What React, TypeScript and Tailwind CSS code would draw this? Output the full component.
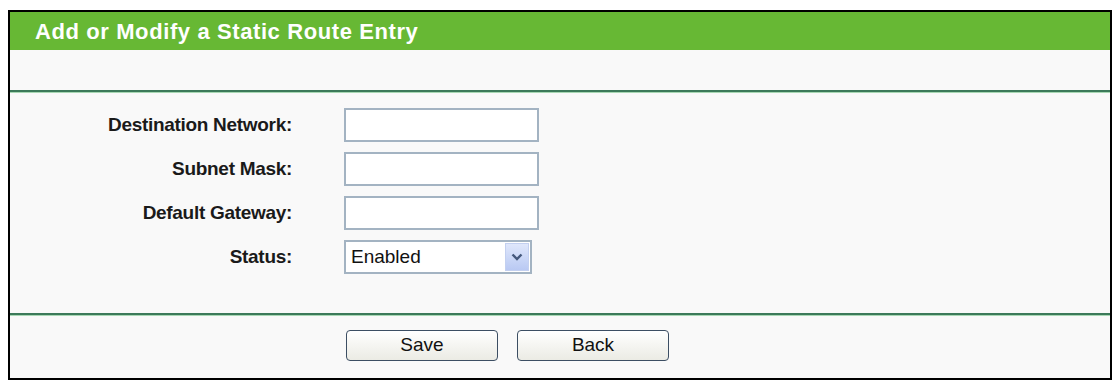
export default function App() {
  const rows = [
    { label: "Destination Network:" },
    { label: "Subnet Mask:" },
    { label: "Default Gateway:" },
  ];
  return (
    <div className="min-h-screen bg-white pt-[10px] pl-[8px]" style={{ fontFamily: '"Liberation Sans", Arial, sans-serif' }}>
      <div className="flex h-[370px] w-[1104px] flex-col border-2 border-black bg-[#f9f9f9]">
        <div className="flex h-[38px] items-center bg-[#67b834] pl-[25px] text-[22px] font-bold tracking-[0.6px] text-white">
          Add or Modify a Static Route Entry
        </div>
        <div className="h-[40px]" />
        <div className="h-[2px] bg-[#3c7a5a] shadow-[0_1px_0_#a8d8b4]" />
        <div className="flex flex-col gap-[10px] pt-[16px]">
          {rows.map((r) => (
            <div key={r.label} className="flex items-center">
              <div className="w-[282px] text-right text-[19px] font-bold tracking-[-0.3px] text-[#1a1a1a]">{r.label}</div>
              <input className="ml-[52px] h-[34px] w-[195px] border-2 border-[#a3b3c2] bg-white outline-none" />
            </div>
          ))}
          <div className="flex items-center">
            <div className="w-[282px] text-right text-[19px] font-bold tracking-[-0.3px] text-[#1a1a1a]">Status:</div>
            <div className="ml-[52px] flex h-[34px] w-[188px] items-center justify-between border-2 border-[#a3b3c2] bg-white pl-[5px] pr-[1px]">
              <span className="text-[19px] text-[#111]">Enabled</span>
              <div className="flex h-[28px] w-[24px] items-center justify-center border border-[#c3d0f0] bg-gradient-to-b from-[#dfe7fb] to-[#b9c9f3]">
                <svg width="12" height="8" viewBox="0 0 12 8">
                  <path d="M1.5 1.5 L6 6 L10.5 1.5" fill="none" stroke="#44587c" strokeWidth="2.4" />
                </svg>
              </div>
            </div>
          </div>
        </div>
        <div className="h-[39px]" />
        <div className="h-[2px] bg-[#3c7a5a] shadow-[0_1px_0_#a8d8b4]" />
        <div className="flex gap-[19px] pl-[336px] pt-[15px]">
          {["Save", "Back"].map((b) => (
            <button
              key={b}
              className="h-[31px] w-[152px] rounded-[4px] border border-[#3c4e63] bg-gradient-to-b from-white to-[#ebebe4] text-[19px] text-[#111]"
            >
              {b}
            </button>
          ))}
        </div>
      </div>
    </div>
  );
}
